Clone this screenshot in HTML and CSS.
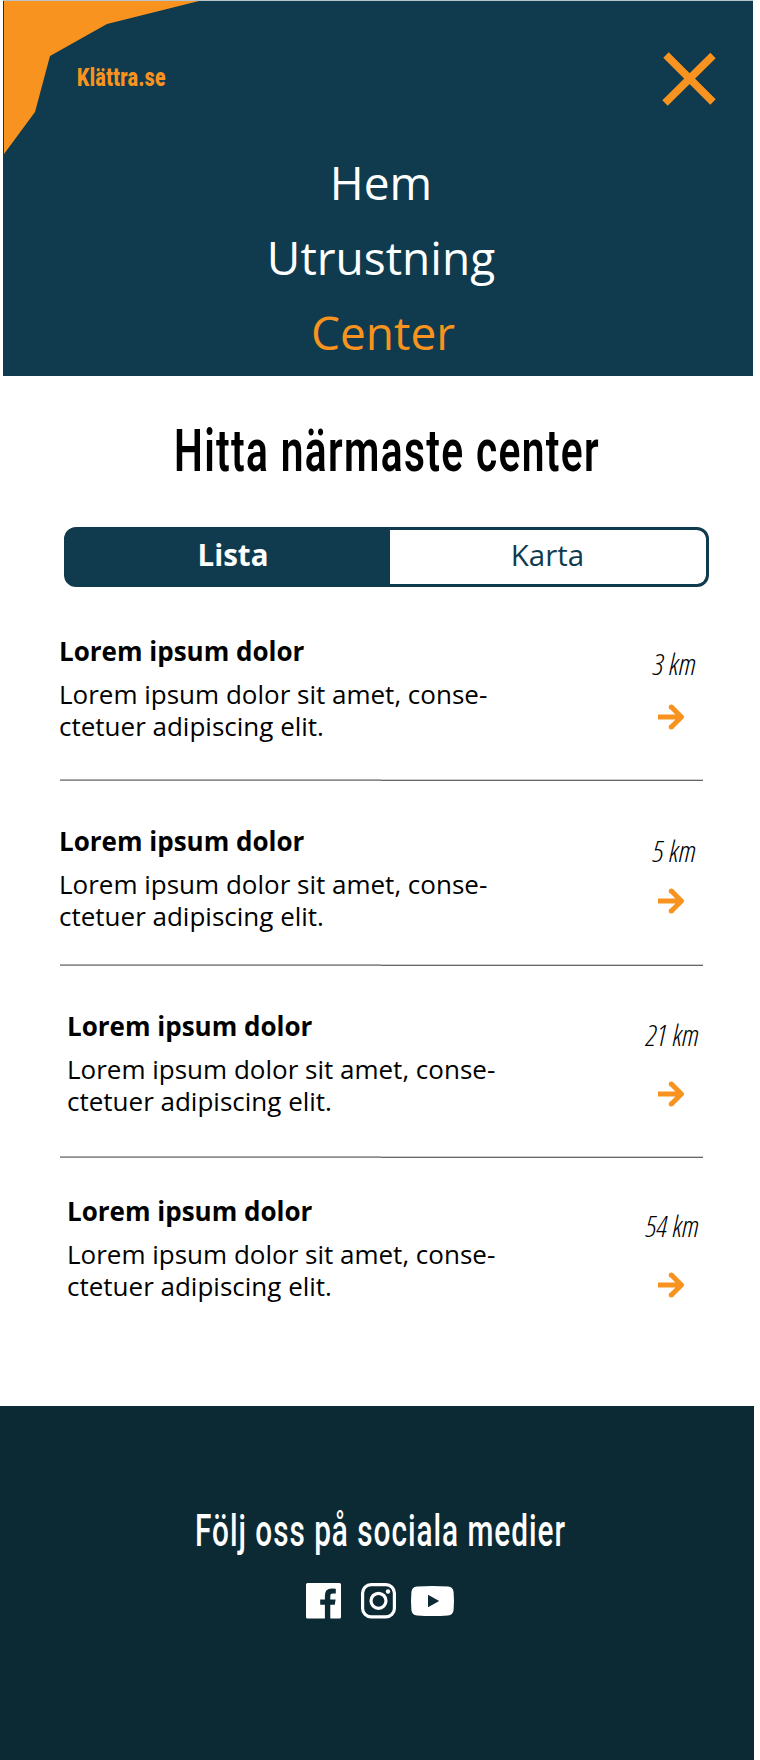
FILE: index.html
```
<!DOCTYPE html>
<html lang="sv">
<head>
<meta charset="utf-8">
<title>Klättra.se</title>
<link rel="stylesheet" href="styles.css">
</head>
<body>
<svg class="symbols" aria-hidden="true">
  <symbol id="arrow" viewBox="0 0 26 26"><path d="M0 13H23M13.2 2.8L23.4 13L13.2 23.2" fill="none" stroke="#f8931f" stroke-width="5" stroke-linejoin="round"/><circle cx="13.2" cy="2.9" r="2.5" fill="#f8931f"/><circle cx="13.2" cy="23.1" r="2.5" fill="#f8931f"/></symbol>
</svg>
<header class="header">
  <svg class="corner" width="200" height="156" viewBox="0 0 200 156"><path d="M1 0H196L104 23L47 55L32 111L1 153Z" fill="#f8931f"/></svg>
  <div class="topbar">
    <svg class="logo" width="100" height="30"><text x="-1" y="22" textLength="89" lengthAdjust="spacingAndGlyphs">Klättra.se</text></svg>
    <svg class="close" width="56" height="56" viewBox="0 0 56 56"><path d="M5 5L52 52M52 5.500L4 53" stroke="#f8931f" stroke-width="7.600"/></svg>
  </div>
  <nav class="nav">
    <a class="link">Hem</a>
    <a class="link">Utrustning</a>
    <a class="link current">Center</a>
  </nav>
</header>
<main class="main">
  <svg class="heading" width="430" height="70"><text x="0" y="53" textLength="426" lengthAdjust="spacingAndGlyphs">Hitta närmaste center</text></svg>
  <div class="toggle">
    <div class="tab active">Lista</div>
    <div class="tab">Karta</div>
  </div>
  <section class="list">
    <article class="item first">
      <div class="info"><h2 class="title">Lorem ipsum dolor</h2><p class="desc">Lorem ipsum dolor sit amet, conse-<br>ctetuer adipiscing elit.</p></div>
      <div class="side"><svg class="km" width="60" height="40"><text x="10" y="32" textLength="43" lengthAdjust="spacingAndGlyphs">3 km</text></svg><svg class="arrow"><use href="#arrow"/></svg></div>
    </article>
    <article class="item second">
      <div class="info"><h2 class="title">Lorem ipsum dolor</h2><p class="desc">Lorem ipsum dolor sit amet, conse-<br>ctetuer adipiscing elit.</p></div>
      <div class="side"><svg class="km" width="60" height="40"><text x="10" y="32" textLength="43" lengthAdjust="spacingAndGlyphs">5 km</text></svg><svg class="arrow"><use href="#arrow"/></svg></div>
    </article>
    <article class="item third">
      <div class="info"><h2 class="title">Lorem ipsum dolor</h2><p class="desc">Lorem ipsum dolor sit amet, conse-<br>ctetuer adipiscing elit.</p></div>
      <div class="side"><svg class="km" width="60" height="40"><text x="3" y="32" textLength="53" lengthAdjust="spacingAndGlyphs">21 km</text></svg><svg class="arrow"><use href="#arrow"/></svg></div>
    </article>
    <article class="item fourth">
      <div class="info"><h2 class="title">Lorem ipsum dolor</h2><p class="desc">Lorem ipsum dolor sit amet, conse-<br>ctetuer adipiscing elit.</p></div>
      <div class="side"><svg class="km" width="60" height="40"><text x="3" y="32" textLength="53" lengthAdjust="spacingAndGlyphs">54 km</text></svg><svg class="arrow"><use href="#arrow"/></svg></div>
    </article>
  </section>
</main>
<footer class="footer">
  <svg class="follow" width="380" height="60"><text x="0" y="39.500" textLength="371" lengthAdjust="spacingAndGlyphs">Följ oss på sociala medier</text></svg>
  <div class="social">
    <svg width="35" height="36" viewBox="0 0 35 36"><path fill="#fff" fill-rule="evenodd" d="M1.500 0H33.500Q35 0 35 1.500V34Q35 35.500 33.500 35.500H24.300V21.700H28.800L29.600 16.400H24.300V13Q24.300 10.600 27 10.600H29.800V5.800Q28 5.500 25.600 5.500Q18.900 5.500 18.900 12.300V16.400H14.200V21.700H18.900V35.500H1.500Q0 35.500 0 34V1.500Q0 0 1.500 0Z"/></svg>
    <svg width="35" height="36" viewBox="0 0 35 36"><rect x="1.600" y="1.600" width="31.800" height="32.300" rx="8.500" fill="none" stroke="#fff" stroke-width="3.200"/><circle cx="17.500" cy="17.800" r="7.500" fill="none" stroke="#fff" stroke-width="3.200"/><circle cx="27" cy="8.500" r="2.200" fill="#fff"/></svg>
    <svg width="43" height="36" viewBox="0 0 43 36"><path fill="#fff" fill-rule="evenodd" d="M6 3.400Q21.500 2.400 37 3.400Q42 3.800 42.600 9Q43.400 18 42.600 27Q42 32.200 37 32.600Q21.500 33.600 6 32.600Q1 32.200 .4 27Q-.4 18 .4 9Q1 3.800 6 3.400ZM17 11.800V24.200L28.200 18Z"/></svg>
  </div>
</footer>
</body>
</html>
```
FILE: styles.css
```
* { box-sizing: border-box; }
body { margin: 0; width: 760px; height: 1760px; background: #fff; color: #000; font-family: "Open Sans", "Noto Sans", sans-serif; overflow: hidden; }
svg { display: block; flex: none; overflow: visible; }
.symbols { position: absolute; width: 0; height: 0; }
.header { position: relative; width: 750px; height: 376px; margin-left: 3px; background: #103b4e; border-top: 1px solid #b7c4ca; }
.corner { position: absolute; left: 0; top: 0; }
.topbar { display: flex; justify-content: space-between; height: 144px; padding: 49px 36px 0 75px; }
.logo { margin-top: 14px; fill: #f8931f; font: 900 26.500px Roboto, sans-serif; letter-spacing: .6px; }
.nav { display: flex; flex-direction: column; align-items: center; padding-left: 6px; }
.link { color: #fff; font-size: 46px; line-height: 75px; }
.link.current { color: #f8931f; padding-left: 4px; }
.main { height: 1030px; padding: 42px 0 0 60px; }
.heading { margin-left: 114px; font: 600 60px Roboto, sans-serif; letter-spacing: 2px; }
.toggle { display: grid; grid-template-columns: 323px 1fr; width: 645px; height: 60px; margin: 39px 0 0 4px; border: 3px solid #103b4e; border-radius: 12px; overflow: hidden; background: #103b4e; }
.tab { background: #fff; color: #103b4e; text-align: center; font-size: 29.500px; line-height: 50px; padding-right: 1px; border-radius: 0 8px 8px 0; }
.tab.active { background: #103b4e; color: #fff; font-weight: 700; border-radius: 0; padding: 0 0 0 9px; }
.item { display: flex; justify-content: space-between; width: 643px; }
.info { margin-left: -1px; }
.first, .second, .third { background: linear-gradient(90deg, #aaa 50%, #ccc 50%) 0 calc(100% - 1px) / 100% 1px no-repeat, linear-gradient(90deg, #8c8c8c 50%, #666 50%) 0 100% / 100% 1px no-repeat; }
.first { height: 194px; padding-top: 48px; }
.second { height: 185px; padding-top: 44px; }
.third { height: 192px; padding: 44px 0 0 8px; }
.fourth { height: 248px; padding: 37px 0 0 8px; }
.title { margin: 0 0 11px; font-size: 26px; line-height: 32px; font-weight: 700; }
.desc { margin: 0; font-size: 26px; line-height: 32px; }
.side { width: 60px; padding-top: 8px; }
.second .side { padding-top: 5px; }
.third .side { padding-top: 4px; }
.fourth .side { padding-top: 10px; }
.km { font: italic 300 30px "Open Sans", sans-serif; font-stretch: 75%; }
.arrow { width: 26px; height: 26px; margin: 21px 0 0 15px; }
.second .arrow { margin-top: 18px; }
.third .arrow, .fourth .arrow { margin-top: 27px; }
.footer { width: 754px; height: 354px; padding-top: 100px; background: #0c2a34; }
.follow { margin-left: 195px; fill: #fff; font: 500 45px Roboto, sans-serif; letter-spacing: 1.500px; }
.social { display: flex; margin: 17px 0 0 306px; gap: 15px; }
.social svg:first-child { margin-right: 5px; }
```
